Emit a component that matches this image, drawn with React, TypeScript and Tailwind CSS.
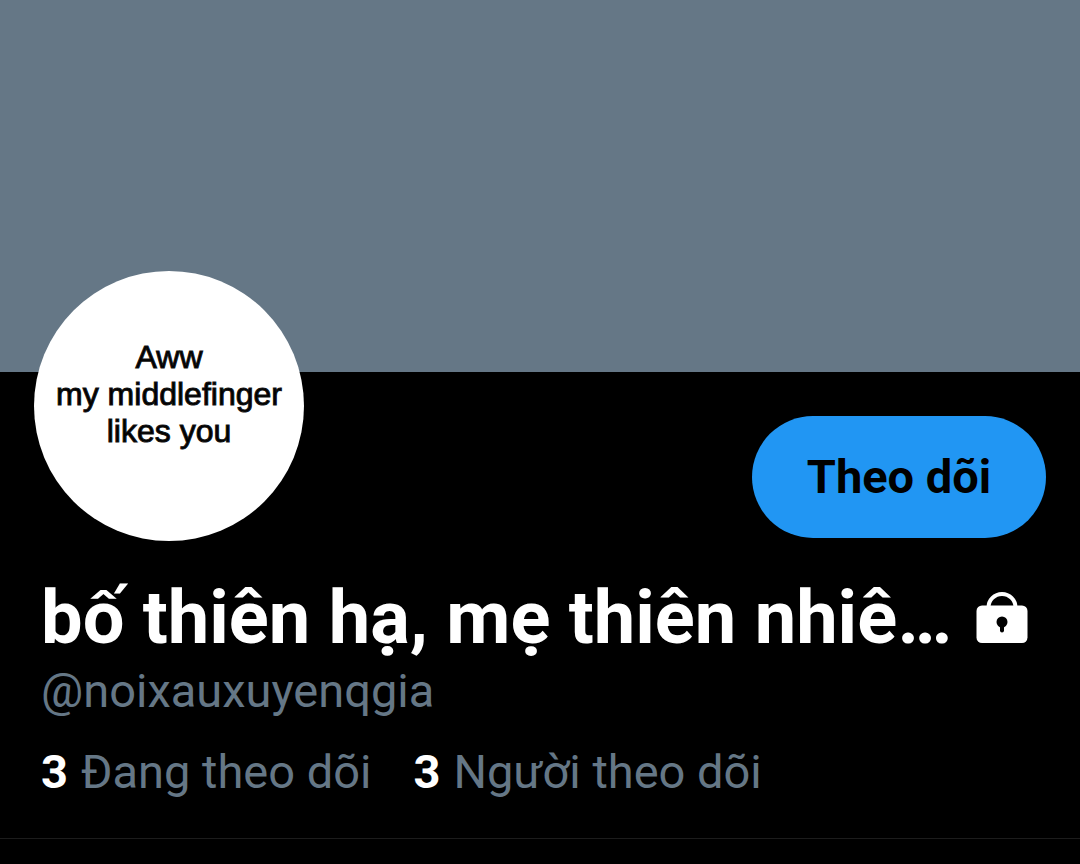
export default function App() {
  return (
    <main className="min-h-screen bg-black font-['Roboto',sans-serif] text-white">
      <div className="h-[372px] bg-[#657786]" />
      <section className="border-b border-[#1c1c1c] px-[34px] pb-[38px]">
        <div className="flex items-start justify-between">
          <div
            role="img"
            aria-label="Profile picture"
            className="-mt-[101px] flex size-[270px] flex-col items-center rounded-full bg-white pt-[68px] font-['Liberation_Sans',sans-serif] text-[32px] leading-[37px] whitespace-nowrap text-black [-webkit-text-stroke:1px_#111111]"
          >
            <span>Aww</span>
            <span>my middlefinger</span>
            <span>likes you</span>
          </div>
          <button
            type="button"
            className="mt-[44px] h-[122px] w-[294px] rounded-full bg-[#2196f3] text-[47px] font-bold text-black"
          >
            Theo dõi
          </button>
        </div>
        <div className="px-[7px] pt-[33px]">
          <div className="flex items-center gap-[24px]">
            <h1 className="text-[74px] leading-[88px] font-bold whitespace-nowrap">
              bố thiên hạ, mẹ thiên nhiê…
            </h1>
            <svg viewBox="0 0 52 52" className="size-[52px] shrink-0" role="img" aria-label="Protected account">
              <path d="M12.5 15.5a13.5 13.5 0 0 1 27 0" fill="none" stroke="white" strokeWidth="4" />
              <rect x="0.5" y="13.5" width="51" height="37.5" rx="5.5" fill="white" />
              <circle cx="26" cy="30" r="5.5" fill="black" />
              <path d="M26 31v7.5" stroke="black" strokeWidth="4" strokeLinecap="round" />
            </svg>
          </div>
          <p className="mt-px text-[47px] leading-[56px] text-[#657786]">@noixauxuyenqgia</p>
          <nav className="mt-[25px] flex gap-[42px] text-[47px] leading-[56px]">
            <a href="#following" className="flex gap-[13px]">
              <span className="font-bold">3</span>
              <span className="text-[#657786]">Đang theo dõi</span>
            </a>
            <a href="#followers" className="flex gap-[13px]">
              <span className="font-bold">3</span>
              <span className="text-[#657786]">Người theo dõi</span>
            </a>
          </nav>
        </div>
      </section>
    </main>
  );
}
